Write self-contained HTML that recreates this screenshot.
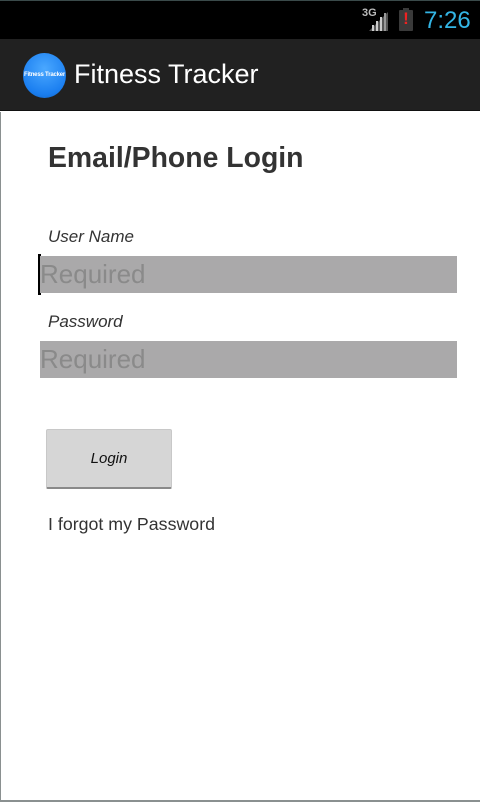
<!DOCTYPE html>
<html><head><meta charset="utf-8"><style>
*{margin:0;padding:0;box-sizing:border-box}
body{width:480px;height:802px;background:#fff;font-family:"Liberation Sans",sans-serif;position:relative;overflow:hidden}
.sb{position:absolute;left:0;top:0;width:480px;height:39px;background:#000;border-top:1px solid #3a4a4a}
.ab{position:absolute;left:0;top:39px;width:480px;height:72px;background:#212121;border-bottom:1px solid #111}
.logo{position:absolute;left:23px;top:14px;width:43px;height:45px;border-radius:50%;background:radial-gradient(circle at 50% 35%,#4aa8ff,#1a7ef0 70%,#1060c0);color:#fff;font-size:6px;font-weight:bold;text-align:center;line-height:45px;white-space:nowrap;letter-spacing:-0.2px}
.title{position:absolute;left:74px;top:20px;color:#fff;font-size:27px}
.t{position:absolute;color:#333}
.inp{position:absolute;left:40px;width:417px;height:37px;background:#aaa9aa;color:#8a8a8a;font-size:26px;line-height:37px;padding-left:0}
.btn{position:absolute;left:46px;top:429px;width:126px;height:60px;background:#d6d6d6;border:1px solid #c8c8c8;border-bottom:2px solid #8a8a8a;border-radius:2px;text-align:center;line-height:58px;font-style:italic;font-size:15px;color:#111}
</style></head><body>
<div class="sb">
<div style="position:absolute;left:362px;top:6px;color:#bbb;font-size:11px;font-weight:bold">3G</div>
<svg style="position:absolute;left:367px;top:7px" width="22" height="24"><polygon points="2,23 21,4 21,23" fill="#555"/><rect x="5" y="17" width="2" height="6" fill="#ccc"/><rect x="9" y="13" width="2" height="10" fill="#ccc"/><rect x="13" y="9" width="2" height="14" fill="#ccc"/><rect x="17" y="5" width="2" height="18" fill="#999"/></svg>
<div style="position:absolute;left:399px;top:9px;width:14px;height:21px;background:#3a3a3a;border-radius:1px"></div>
<div style="position:absolute;left:403px;top:7px;width:6px;height:3px;background:#3a3a3a"></div>
<div style="position:absolute;left:399px;top:8px;width:14px;text-align:center;color:#e22;font-weight:bold;font-size:17px">!</div>
<div style="position:absolute;left:424px;top:6px;color:#33b5e5;font-size:24px">7:26</div>
</div>
<div class="ab"><div class="logo">Fitness Tracker</div><div class="title">Fitness Tracker</div></div>
<div style="position:absolute;left:0;top:112px;width:1px;height:690px;background:#8a9090"></div>
<div style="position:absolute;left:0;top:800px;width:480px;height:2px;background:#8a9090"></div>
<div class="t" style="left:48px;top:142px;font-size:28.4px;font-weight:bold">Email/Phone Login</div>
<div class="t" style="left:48px;top:227px;font-size:17px;font-style:italic">User Name</div>
<div class="inp" style="top:256px">Required</div>
<div style="position:absolute;left:38px;top:254px;width:3px;height:41px;border:2px solid #000;border-right:none"></div>
<div class="t" style="left:48px;top:312px;font-size:17px;font-style:italic">Password</div>
<div class="inp" style="top:341px">Required</div>
<div class="btn">Login</div>
<div class="t" style="left:48px;top:514px;font-size:17.8px">I forgot my Password</div>
</body></html>
